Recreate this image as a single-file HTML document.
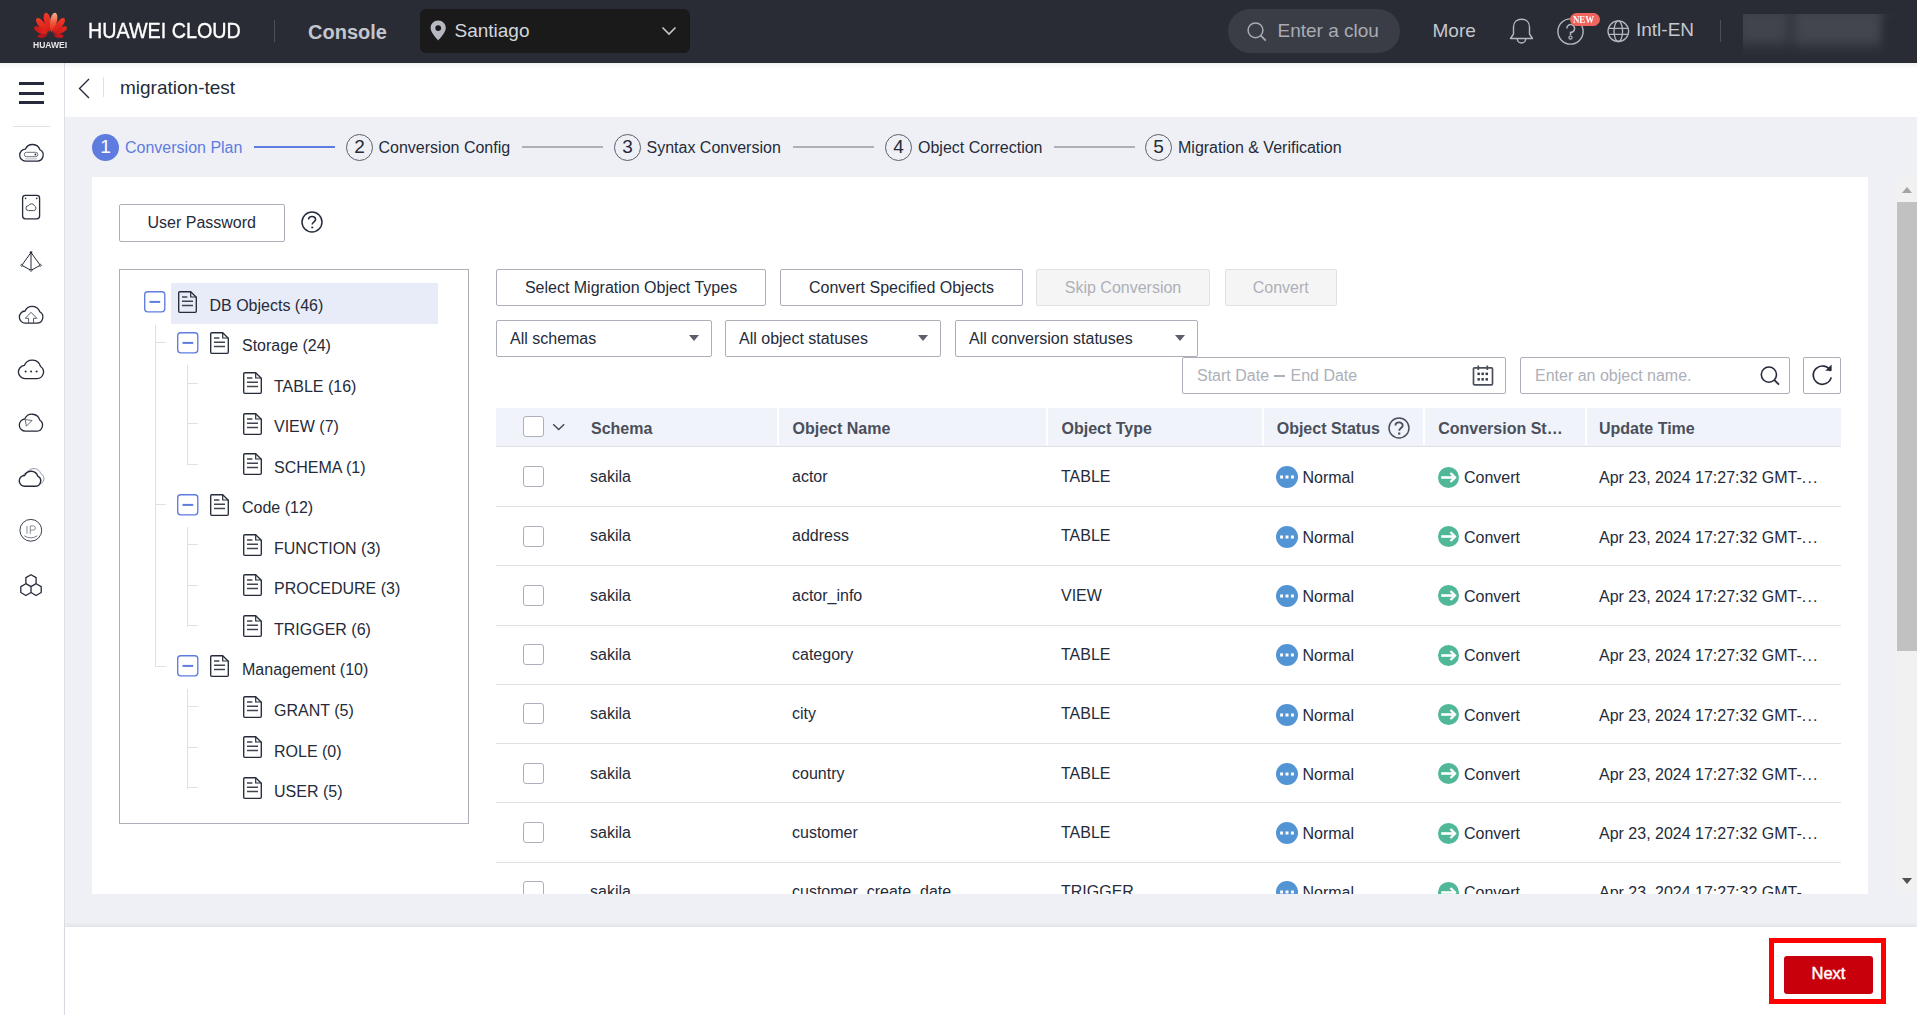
<!DOCTYPE html>
<html><head><meta charset="utf-8">
<style>
*{box-sizing:border-box;margin:0;padding:0}
html,body{width:1917px;height:1015px;overflow:hidden;background:#eef0f5;font-family:"Liberation Sans",sans-serif;color:#252b3a;font-size:16px}
.a{position:absolute}
.t{position:absolute;white-space:nowrap;line-height:1}
svg{position:absolute;overflow:visible}
.btn{position:absolute;border:1px solid #adb0b8;border-radius:2px;background:#fff}
.dis{background:#f5f5f6;border-color:#dfe1e6}
.cb{position:absolute;width:21px;height:21px;border:1px solid #adb0b8;border-radius:3px;background:#fff}
.step{position:absolute;width:27px;height:27px;border-radius:50%;border:1px solid #5a5f6b}
.sline{position:absolute;height:2px;background:#adb0b8;top:146px;width:81px}
.tri{position:absolute;width:0;height:0;border-left:5px solid transparent;border-right:5px solid transparent;border-top:6px solid #5a5f6b}
.hl{position:absolute;background:#dfe1e6}
</style></head><body>
<div class="a" style="left:0;top:0;width:1917px;height:63px;background:#292c34"></div>
<svg style="left:33px;top:11px" width="36" height="28" viewBox="0 0 36 28"><defs><linearGradient id="lgA" x1="0" y1="0" x2="0" y2="1"><stop offset="0" stop-color="#f03a2a"/><stop offset="1" stop-color="#d81a14"/></linearGradient><linearGradient id="lgB" x1="0" y1="0" x2="0" y2="1"><stop offset="0" stop-color="#f7b08e"/><stop offset="0.5" stop-color="#ee5a3c"/><stop offset="1" stop-color="#e0241a"/></linearGradient><linearGradient id="lgC" x1="0" y1="0" x2="1" y2="0"><stop offset="0" stop-color="#c8181a"/><stop offset="1" stop-color="#e8261c"/></linearGradient></defs><path d="M16.70,21.40 C19.97,13.62 17.10,1.35 12.80,1.80 C8.66,3.03 10.70,15.46 16.70,21.40Z" fill="url(#lgA)"/><path d="M18.30,21.40 C24.30,15.46 26.34,3.03 22.20,1.80 C17.90,1.35 15.03,13.62 18.30,21.40Z" fill="url(#lgB)"/><path d="M15.40,22.20 C14.62,14.35 6.89,5.26 3.60,7.40 C0.79,10.13 7.92,19.69 15.40,22.20Z" fill="url(#lgA)"/><path d="M19.60,22.20 C27.08,19.69 34.21,10.13 31.40,7.40 C28.11,5.26 20.38,14.35 19.60,22.20Z" fill="url(#lgA)"/><path d="M14.40,23.40 C11.62,17.50 3.14,13.27 1.20,16.20 C-0.21,19.42 7.94,24.26 14.40,23.40Z" fill="url(#lgC)"/><path d="M20.60,23.40 C27.06,24.26 35.21,19.42 33.80,16.20 C31.86,13.27 23.38,17.50 20.60,23.40Z" fill="url(#lgC)"/><path d="M14.00,24.80 C10.59,22.19 4.68,22.69 4.60,25.20 C4.89,27.69 10.83,27.69 14.00,24.80Z" fill="#b8141b"/><path d="M21.00,24.80 C24.17,27.69 30.11,27.69 30.40,25.20 C30.32,22.69 24.41,22.19 21.00,24.80Z" fill="#c8161d"/></svg>
<div class="t" style="left:33px;top:40.77px;font-size:8.8px;color:#e6e6e6;font-weight:bold;transform:scaleX(0.97);transform-origin:0 0">HUAWEI</div>
<div class="t" style="left:88px;top:19.91px;font-size:22px;color:#ffffff;transform:scaleX(0.897);transform-origin:0 0;-webkit-text-stroke:0.35px #fff">HUAWEI CLOUD</div>
<div class="a" style="left:274px;top:20px;width:1px;height:22px;background:#4d5058"></div>
<div class="t" style="left:308px;top:22.15px;font-size:20px;color:#c3c6cd;font-weight:bold">Console</div>
<div class="a" style="left:420px;top:9px;width:270px;height:44px;background:#1a1a1b;border-radius:6px"></div>
<svg style="left:430px;top:20px" width="17" height="21" viewBox="0 0 17 21"><path d="M8.2 0.6C3.9 0.6 0.6 3.9 0.6 8.1c0 4.8 7.6 12.3 7.6 12.3s7.6-7.5 7.6-12.3C15.8 3.9 12.5 0.6 8.2 0.6z" fill="#b6b9c1"/><circle cx="8.2" cy="8.1" r="2.9" fill="#1a1a1b"/></svg>
<div class="t" style="left:454.5px;top:21.17px;font-size:19px;color:#d3d6dc">Santiago</div>
<svg style="left:661px;top:26px" width="16" height="10" viewBox="0 0 16 10"><path d="M1.5 1.5 L8 8 L14.5 1.5" fill="none" stroke="#c5c8cf" stroke-width="1.6"/></svg>
<div class="a" style="left:1228px;top:9px;width:172px;height:44px;background:#3a3d45;border-radius:22px"></div>
<svg style="left:1246px;top:21px" width="22" height="22" viewBox="0 0 22 22"><circle cx="9.5" cy="9.3" r="7.4" fill="none" stroke="#a9acb4" stroke-width="1.5"/><path d="M14.8 14.6 L19.8 19.6" stroke="#a9acb4" stroke-width="1.7"/></svg>
<div class="t" style="left:1277.5px;top:21.07px;font-size:19px;color:#a9acb4">Enter a clou</div>
<div class="t" style="left:1432.5px;top:21.07px;font-size:19px;color:#c5c8cf">More</div>
<svg style="left:1509px;top:18px" width="25" height="27" viewBox="0 0 25 27"><path d="M4.5 16 V9 C4.5 4 8 1.2 12.5 1.2 C17 1.2 20.5 4 20.5 9 V16 L23.5 20.5 H1.5 Z" fill="none" stroke="#b4b7be" stroke-width="1.4" stroke-linejoin="round"/><path d="M8.3 20.8 A4.2 4.2 0 0 0 16.7 20.8" fill="none" stroke="#b4b7be" stroke-width="1.4"/></svg>
<svg style="left:1556px;top:17px" width="29" height="29" viewBox="0 0 29 29"><circle cx="14.5" cy="14.5" r="12.6" fill="none" stroke="#b4b7be" stroke-width="1.4"/><path d="M10.8 11.5 A3.9 3.9 0 1 1 14.5 15.4 V18.2" fill="none" stroke="#b4b7be" stroke-width="1.5"/><circle cx="14.5" cy="20.6" r="1.6" fill="none" stroke="#b4b7be" stroke-width="1.2"/></svg>
<div class="a" style="left:1570px;top:13px;width:30px;height:13px;background:#f0665e;border-radius:7px"></div>
<div class="t" style="left:1573px;top:14.97px;font-size:10.5px;color:#fff;font-weight:bold;font-family:'Liberation Serif',serif;transform:scaleX(0.84);transform-origin:0 0">NEW</div>
<svg style="left:1606px;top:19px" width="24" height="24" viewBox="0 0 24 24"><g fill="none" stroke="#b4b7be" stroke-width="1.3"><circle cx="12.3" cy="12.2" r="10.3"/><ellipse cx="12.3" cy="12.2" rx="4.3" ry="10.3"/><path d="M2.5 9.4 H22.1 M2.5 15.3 H22.1"/></g></svg>
<div class="t" style="left:1636px;top:20.47px;font-size:19px;color:#c5c8cf">Intl-EN</div>
<div class="a" style="left:1720px;top:20px;width:1px;height:22px;background:#4d5058"></div>
<div class="a" style="left:1743px;top:14px;width:157px;height:41px;background:#2b2e35;overflow:hidden"><div class="a" style="left:-6px;top:-6px;width:52px;height:36px;background:#41444c;filter:blur(6px)"></div><div class="a" style="left:50px;top:-6px;width:92px;height:37px;background:#43464e;filter:blur(6px)"></div><div class="a" style="left:140px;top:0px;width:30px;height:45px;background:#292c33;filter:blur(5px)"></div></div>
<div class="a" style="left:0;top:63px;width:65px;height:952px;background:#fff;border-right:1px solid #dcdfe6"></div>
<div class="a" style="left:19px;top:82px;width:25px;height:3px;background:#252b3a"></div>
<div class="a" style="left:19px;top:91.5px;width:25px;height:3px;background:#252b3a"></div>
<div class="a" style="left:19px;top:101px;width:25px;height:3px;background:#252b3a"></div>
<div class="a" style="left:13px;top:126px;width:37px;height:1px;background:#dfe1e6"></div>
<svg style="left:0;top:0" width="65" height="1015" viewBox="0 0 65 1015"><path d="M25.48,161.10 A5.98,5.98 0 0 1 25.40,149.15 A7.80,7.80 0 0 1 39.92,149.79 A5.98,5.98 0 0 1 37.22,161.10 Z" fill="none" stroke="#252b3a" stroke-width="1.3"/><rect x="24.3" y="152.3" width="13.6" height="4.4" rx="2.2" fill="none" stroke="#6a6f7a" stroke-width="1"/><circle cx="35.4" cy="154.5" r="0.9" fill="#252b3a"/><path d="M25 158.9 H37" stroke="#b8bbc2" stroke-width="1"/><rect x="22.6" y="195.4" width="17" height="23.4" rx="2.8" fill="none" stroke="#252b3a" stroke-width="1.3"/><circle cx="25.6" cy="198.4" r="0.8" fill="#252b3a"/><circle cx="36.8" cy="198.4" r="0.8" fill="#252b3a"/><path d="M28.45,210.60 A2.45,2.45 0 1 1 28.58,205.71 A3.20,3.20 0 0 1 34.50,205.90 A2.45,2.45 0 0 1 33.55,210.60 Z" fill="none" stroke="#4a4f5b" stroke-width="1"/><path d="M31 252.5 L21.8 265.3 L31 270.3 L40.3 265.3 Z M31 252.5 V270.3" fill="none" stroke="#252b3a" stroke-width="1"/><circle cx="31" cy="252.6" r="1.3" fill="#252b3a"/><circle cx="21.8" cy="265.3" r="1" fill="#fff" stroke="#252b3a" stroke-width="0.8"/><circle cx="40.3" cy="265.3" r="1" fill="#fff" stroke="#252b3a" stroke-width="0.8"/><circle cx="31" cy="270.3" r="1" fill="#fff" stroke="#252b3a" stroke-width="0.8"/><path d="M25.35,323.10 A6.05,6.05 0 0 1 25.05,311.01 A7.90,7.90 0 0 1 39.79,311.77 A6.05,6.05 0 0 1 36.85,323.10 Z" fill="none" stroke="#252b3a" stroke-width="1.3"/><path d="M28.6 323 V318.3 H25.3 L31 312.3 L36.8 318.3 H33.5 V323" fill="none" stroke="#5a5f6b" stroke-width="1"/><path d="M25.12,378.60 A6.62,6.62 0 0 1 24.32,365.40 A8.65,8.65 0 0 1 40.57,366.48 A6.62,6.62 0 0 1 36.88,378.60 Z" fill="none" stroke="#252b3a" stroke-width="1.3"/><circle cx="25.6" cy="371.4" r="1" fill="#252b3a"/><circle cx="31.1" cy="371.4" r="1" fill="#252b3a"/><circle cx="36.6" cy="371.4" r="1" fill="#252b3a"/><path d="M25.42,431.20 A6.12,6.12 0 0 1 24.74,419.00 A7.99,7.99 0 0 1 39.73,419.96 A6.12,6.12 0 0 1 36.38,431.20 Z" fill="none" stroke="#252b3a" stroke-width="1.3"/><path d="M25.2 419.6 L32 420.5 L26.4 426.2 Z" fill="none" stroke="#5a5f6b" stroke-width="0.9"/><path d="M27.12,484.20 A5.62,5.62 0 0 1 27.11,472.97 A7.33,7.33 0 0 1 40.75,473.54 A5.62,5.62 0 0 1 38.28,484.20 Z" fill="none" stroke="#9a9ea8" stroke-width="1"/><path d="M24.70,486.30 A5.40,5.40 0 0 1 24.62,475.50 A7.05,7.05 0 0 1 37.75,476.09 A5.40,5.40 0 0 1 35.30,486.30 Z" fill="#fff" stroke="#252b3a" stroke-width="1.4"/><circle cx="30.8" cy="530.3" r="10.9" fill="none" stroke="#3a3f4b" stroke-width="1"/><path d="M27 525.9 V533.8 M30.3 533.8 V525.9 H33.3 A2.1 2.1 0 0 1 33.3 530.1 H30.3" fill="none" stroke="#7a7f8a" stroke-width="0.9"/><path d="M24.3 535.8 Q30.8 540 37.4 535.8" fill="none" stroke="#6a6f7a" stroke-width="0.9"/><path d="M31.00,574.70 L36.11,577.65 L36.11,583.55 L31.00,586.50 L25.89,583.55 L25.89,577.65 Z M25.90,583.70 L31.01,586.65 L31.01,592.55 L25.90,595.50 L20.79,592.55 L20.79,586.65 Z M36.10,583.70 L41.21,586.65 L41.21,592.55 L36.10,595.50 L30.99,592.55 L30.99,586.65 Z" fill="none" stroke="#252b3a" stroke-width="1.3" stroke-linejoin="round"/></svg>
<div class="a" style="left:65px;top:63px;width:1852px;height:54px;background:#fff"></div>
<svg style="left:78px;top:78px" width="12" height="21" viewBox="0 0 12 21"><path d="M11 1 L1.5 10.5 L11 20" fill="none" stroke="#252b3a" stroke-width="1.4"/></svg>
<div class="a" style="left:103px;top:77px;width:1px;height:20px;background:#dfe1e6"></div>
<div class="t" style="left:120px;top:78.07px;font-size:19px">migration-test</div>
<div class="a" style="left:0px;top:63px;width:1917px;height:6px;background:linear-gradient(rgba(0,0,0,0.05),rgba(0,0,0,0))"></div>
<div class="a" style="left:92px;top:134px;width:27px;height:27px;border-radius:50%;background:#5e7ce0"></div>
<div class="t" style="left:92px;top:136.97px;font-size:19px;color:#fff;width:27px;text-align:center">1</div>
<div class="t" style="left:125px;top:140.12px;font-size:16px;color:#5e7ce0">Conversion Plan</div>
<div class="sline" style="left:254px;background:#5e7ce0"></div>
<div class="step" style="left:346px;top:134px"></div>
<div class="t" style="left:346px;top:136.97px;font-size:19px;width:27px;text-align:center">2</div>
<div class="t" style="left:378.5px;top:140.12px;font-size:16px">Conversion Config</div>
<div class="sline" style="left:522px"></div>
<div class="step" style="left:614px;top:134px"></div>
<div class="t" style="left:614px;top:136.97px;font-size:19px;width:27px;text-align:center">3</div>
<div class="t" style="left:646.5px;top:140.12px;font-size:16px">Syntax Conversion</div>
<div class="sline" style="left:793px"></div>
<div class="step" style="left:885px;top:134px"></div>
<div class="t" style="left:885px;top:136.97px;font-size:19px;width:27px;text-align:center">4</div>
<div class="t" style="left:918px;top:140.12px;font-size:16px">Object Correction</div>
<div class="sline" style="left:1054px"></div>
<div class="step" style="left:1145px;top:134px"></div>
<div class="t" style="left:1145px;top:136.97px;font-size:19px;width:27px;text-align:center">5</div>
<div class="t" style="left:1178px;top:140.12px;font-size:16px">Migration &amp; Verification</div>
<div class="a" style="left:92px;top:177px;width:1776px;height:717px;background:#fff"></div>
<div class="a" style="left:0;top:0;width:1917px;height:894px;overflow:hidden">
<div class="btn" style="left:119px;top:204px;width:166px;height:37.5px"></div>
<div class="t" style="left:147.5px;top:214.72px;font-size:16px">User Password</div>
<svg style="left:301px;top:211.3px" width="22" height="22" viewBox="0 0 22 22"><circle cx="11" cy="11" r="10" fill="none" stroke="#252b3a" stroke-width="1.5"/><path d="M7.6 8.6 C7.6 4.6 14.6 4.6 14.6 8.4 C14.6 10.8 11.2 11 11.2 13.6" fill="none" stroke="#252b3a" stroke-width="1.6"/><rect x="10.3" y="15.6" width="1.9" height="1.7" fill="#252b3a"/></svg>
<div class="a" style="left:119px;top:269px;width:350px;height:555px;border:1px solid #adb0b8"></div>
<div class="a" style="left:171px;top:283px;width:267px;height:41px;background:#e8ecf8"></div>
<svg style="left:144.3px;top:291.30px" width="21.5" height="21.5" viewBox="0 0 21.5 21.5"><rect x="0.7" y="0.7" width="20.1" height="20.1" rx="3" fill="none" stroke="#5e7ce0" stroke-width="1.35"/><path d="M5.5 10.9 H16.2" stroke="#5e7ce0" stroke-width="2"/></svg>
<svg style="left:178px;top:291.30px" width="19" height="22" viewBox="0 0 19 22"><path d="M1.8 0.7 H12.7 L18.3 6.2 V20.2 Q18.3 21.3 17.2 21.3 H1.8 Q0.7 21.3 0.7 20.2 V1.8 Q0.7 0.7 1.8 0.7 Z" fill="none" stroke="#252b3a" stroke-width="1.35" stroke-linejoin="round"/><path d="M12.7 0.7 V6 H18.3" fill="none" stroke="#252b3a" stroke-width="1.2"/><path d="M4 6 H9.4 M4 10.2 H15 M4 14.4 H15" stroke="#3f4450" stroke-width="1.5"/></svg>
<div class="t" style="left:209.5px;top:297.72px;font-size:16px">DB Objects (46)</div>
<svg style="left:177px;top:331.75px" width="21.5" height="21.5" viewBox="0 0 21.5 21.5"><rect x="0.7" y="0.7" width="20.1" height="20.1" rx="3" fill="none" stroke="#5e7ce0" stroke-width="1.35"/><path d="M5.5 10.9 H16.2" stroke="#5e7ce0" stroke-width="2"/></svg>
<svg style="left:210.3px;top:331.75px" width="19" height="22" viewBox="0 0 19 22"><path d="M1.8 0.7 H12.7 L18.3 6.2 V20.2 Q18.3 21.3 17.2 21.3 H1.8 Q0.7 21.3 0.7 20.2 V1.8 Q0.7 0.7 1.8 0.7 Z" fill="none" stroke="#252b3a" stroke-width="1.35" stroke-linejoin="round"/><path d="M12.7 0.7 V6 H18.3" fill="none" stroke="#252b3a" stroke-width="1.2"/><path d="M4 6 H9.4 M4 10.2 H15 M4 14.4 H15" stroke="#3f4450" stroke-width="1.5"/></svg>
<div class="t" style="left:242px;top:338.25px;font-size:16px">Storage (24)</div>
<div class="hl" style="left:155px;top:342.15px;width:11px;height:1px"></div>
<svg style="left:243px;top:372.20px" width="19" height="22" viewBox="0 0 19 22"><path d="M1.8 0.7 H12.7 L18.3 6.2 V20.2 Q18.3 21.3 17.2 21.3 H1.8 Q0.7 21.3 0.7 20.2 V1.8 Q0.7 0.7 1.8 0.7 Z" fill="none" stroke="#252b3a" stroke-width="1.35" stroke-linejoin="round"/><path d="M12.7 0.7 V6 H18.3" fill="none" stroke="#252b3a" stroke-width="1.2"/><path d="M4 6 H9.4 M4 10.2 H15 M4 14.4 H15" stroke="#3f4450" stroke-width="1.5"/></svg>
<div class="t" style="left:274px;top:378.77px;font-size:16px">TABLE (16)</div>
<div class="hl" style="left:187px;top:382.60px;width:11px;height:1px"></div>
<svg style="left:243px;top:412.65px" width="19" height="22" viewBox="0 0 19 22"><path d="M1.8 0.7 H12.7 L18.3 6.2 V20.2 Q18.3 21.3 17.2 21.3 H1.8 Q0.7 21.3 0.7 20.2 V1.8 Q0.7 0.7 1.8 0.7 Z" fill="none" stroke="#252b3a" stroke-width="1.35" stroke-linejoin="round"/><path d="M12.7 0.7 V6 H18.3" fill="none" stroke="#252b3a" stroke-width="1.2"/><path d="M4 6 H9.4 M4 10.2 H15 M4 14.4 H15" stroke="#3f4450" stroke-width="1.5"/></svg>
<div class="t" style="left:274px;top:419.30px;font-size:16px">VIEW (7)</div>
<div class="hl" style="left:187px;top:423.05px;width:11px;height:1px"></div>
<svg style="left:243px;top:453.10px" width="19" height="22" viewBox="0 0 19 22"><path d="M1.8 0.7 H12.7 L18.3 6.2 V20.2 Q18.3 21.3 17.2 21.3 H1.8 Q0.7 21.3 0.7 20.2 V1.8 Q0.7 0.7 1.8 0.7 Z" fill="none" stroke="#252b3a" stroke-width="1.35" stroke-linejoin="round"/><path d="M12.7 0.7 V6 H18.3" fill="none" stroke="#252b3a" stroke-width="1.2"/><path d="M4 6 H9.4 M4 10.2 H15 M4 14.4 H15" stroke="#3f4450" stroke-width="1.5"/></svg>
<div class="t" style="left:274px;top:459.82px;font-size:16px">SCHEMA (1)</div>
<div class="hl" style="left:187px;top:463.50px;width:11px;height:1px"></div>
<svg style="left:177px;top:493.55px" width="21.5" height="21.5" viewBox="0 0 21.5 21.5"><rect x="0.7" y="0.7" width="20.1" height="20.1" rx="3" fill="none" stroke="#5e7ce0" stroke-width="1.35"/><path d="M5.5 10.9 H16.2" stroke="#5e7ce0" stroke-width="2"/></svg>
<svg style="left:210.3px;top:493.55px" width="19" height="22" viewBox="0 0 19 22"><path d="M1.8 0.7 H12.7 L18.3 6.2 V20.2 Q18.3 21.3 17.2 21.3 H1.8 Q0.7 21.3 0.7 20.2 V1.8 Q0.7 0.7 1.8 0.7 Z" fill="none" stroke="#252b3a" stroke-width="1.35" stroke-linejoin="round"/><path d="M12.7 0.7 V6 H18.3" fill="none" stroke="#252b3a" stroke-width="1.2"/><path d="M4 6 H9.4 M4 10.2 H15 M4 14.4 H15" stroke="#3f4450" stroke-width="1.5"/></svg>
<div class="t" style="left:242px;top:500.35px;font-size:16px">Code (12)</div>
<div class="hl" style="left:155px;top:503.95px;width:11px;height:1px"></div>
<svg style="left:243px;top:534.00px" width="19" height="22" viewBox="0 0 19 22"><path d="M1.8 0.7 H12.7 L18.3 6.2 V20.2 Q18.3 21.3 17.2 21.3 H1.8 Q0.7 21.3 0.7 20.2 V1.8 Q0.7 0.7 1.8 0.7 Z" fill="none" stroke="#252b3a" stroke-width="1.35" stroke-linejoin="round"/><path d="M12.7 0.7 V6 H18.3" fill="none" stroke="#252b3a" stroke-width="1.2"/><path d="M4 6 H9.4 M4 10.2 H15 M4 14.4 H15" stroke="#3f4450" stroke-width="1.5"/></svg>
<div class="t" style="left:274px;top:540.87px;font-size:16px">FUNCTION (3)</div>
<div class="hl" style="left:187px;top:544.40px;width:11px;height:1px"></div>
<svg style="left:243px;top:574.45px" width="19" height="22" viewBox="0 0 19 22"><path d="M1.8 0.7 H12.7 L18.3 6.2 V20.2 Q18.3 21.3 17.2 21.3 H1.8 Q0.7 21.3 0.7 20.2 V1.8 Q0.7 0.7 1.8 0.7 Z" fill="none" stroke="#252b3a" stroke-width="1.35" stroke-linejoin="round"/><path d="M12.7 0.7 V6 H18.3" fill="none" stroke="#252b3a" stroke-width="1.2"/><path d="M4 6 H9.4 M4 10.2 H15 M4 14.4 H15" stroke="#3f4450" stroke-width="1.5"/></svg>
<div class="t" style="left:274px;top:581.39px;font-size:16px">PROCEDURE (3)</div>
<div class="hl" style="left:187px;top:584.85px;width:11px;height:1px"></div>
<svg style="left:243px;top:614.90px" width="19" height="22" viewBox="0 0 19 22"><path d="M1.8 0.7 H12.7 L18.3 6.2 V20.2 Q18.3 21.3 17.2 21.3 H1.8 Q0.7 21.3 0.7 20.2 V1.8 Q0.7 0.7 1.8 0.7 Z" fill="none" stroke="#252b3a" stroke-width="1.35" stroke-linejoin="round"/><path d="M12.7 0.7 V6 H18.3" fill="none" stroke="#252b3a" stroke-width="1.2"/><path d="M4 6 H9.4 M4 10.2 H15 M4 14.4 H15" stroke="#3f4450" stroke-width="1.5"/></svg>
<div class="t" style="left:274px;top:621.92px;font-size:16px">TRIGGER (6)</div>
<div class="hl" style="left:187px;top:625.30px;width:11px;height:1px"></div>
<svg style="left:177px;top:655.35px" width="21.5" height="21.5" viewBox="0 0 21.5 21.5"><rect x="0.7" y="0.7" width="20.1" height="20.1" rx="3" fill="none" stroke="#5e7ce0" stroke-width="1.35"/><path d="M5.5 10.9 H16.2" stroke="#5e7ce0" stroke-width="2"/></svg>
<svg style="left:210.3px;top:655.35px" width="19" height="22" viewBox="0 0 19 22"><path d="M1.8 0.7 H12.7 L18.3 6.2 V20.2 Q18.3 21.3 17.2 21.3 H1.8 Q0.7 21.3 0.7 20.2 V1.8 Q0.7 0.7 1.8 0.7 Z" fill="none" stroke="#252b3a" stroke-width="1.35" stroke-linejoin="round"/><path d="M12.7 0.7 V6 H18.3" fill="none" stroke="#252b3a" stroke-width="1.2"/><path d="M4 6 H9.4 M4 10.2 H15 M4 14.4 H15" stroke="#3f4450" stroke-width="1.5"/></svg>
<div class="t" style="left:242px;top:662.44px;font-size:16px">Management (10)</div>
<div class="hl" style="left:155px;top:665.75px;width:11px;height:1px"></div>
<svg style="left:243px;top:695.80px" width="19" height="22" viewBox="0 0 19 22"><path d="M1.8 0.7 H12.7 L18.3 6.2 V20.2 Q18.3 21.3 17.2 21.3 H1.8 Q0.7 21.3 0.7 20.2 V1.8 Q0.7 0.7 1.8 0.7 Z" fill="none" stroke="#252b3a" stroke-width="1.35" stroke-linejoin="round"/><path d="M12.7 0.7 V6 H18.3" fill="none" stroke="#252b3a" stroke-width="1.2"/><path d="M4 6 H9.4 M4 10.2 H15 M4 14.4 H15" stroke="#3f4450" stroke-width="1.5"/></svg>
<div class="t" style="left:274px;top:702.97px;font-size:16px">GRANT (5)</div>
<div class="hl" style="left:187px;top:706.20px;width:11px;height:1px"></div>
<svg style="left:243px;top:736.25px" width="19" height="22" viewBox="0 0 19 22"><path d="M1.8 0.7 H12.7 L18.3 6.2 V20.2 Q18.3 21.3 17.2 21.3 H1.8 Q0.7 21.3 0.7 20.2 V1.8 Q0.7 0.7 1.8 0.7 Z" fill="none" stroke="#252b3a" stroke-width="1.35" stroke-linejoin="round"/><path d="M12.7 0.7 V6 H18.3" fill="none" stroke="#252b3a" stroke-width="1.2"/><path d="M4 6 H9.4 M4 10.2 H15 M4 14.4 H15" stroke="#3f4450" stroke-width="1.5"/></svg>
<div class="t" style="left:274px;top:743.50px;font-size:16px">ROLE (0)</div>
<div class="hl" style="left:187px;top:746.65px;width:11px;height:1px"></div>
<svg style="left:243px;top:776.70px" width="19" height="22" viewBox="0 0 19 22"><path d="M1.8 0.7 H12.7 L18.3 6.2 V20.2 Q18.3 21.3 17.2 21.3 H1.8 Q0.7 21.3 0.7 20.2 V1.8 Q0.7 0.7 1.8 0.7 Z" fill="none" stroke="#252b3a" stroke-width="1.35" stroke-linejoin="round"/><path d="M12.7 0.7 V6 H18.3" fill="none" stroke="#252b3a" stroke-width="1.2"/><path d="M4 6 H9.4 M4 10.2 H15 M4 14.4 H15" stroke="#3f4450" stroke-width="1.5"/></svg>
<div class="t" style="left:274px;top:784.02px;font-size:16px">USER (5)</div>
<div class="hl" style="left:187px;top:787.10px;width:11px;height:1px"></div>
<div class="hl" style="left:155px;top:325px;width:1px;height:342.42px"></div>
<div class="hl" style="left:187px;top:364.82px;width:1px;height:99.97px"></div>
<div class="hl" style="left:187px;top:526.92px;width:1px;height:99.98px"></div>
<div class="hl" style="left:187px;top:689.02px;width:1px;height:99.97px"></div>
<div class="btn" style="left:496px;top:269px;width:270px;height:37px;"></div>
<div class="t" style="left:496px;width:270px;text-align:center;top:280.42px;color:#252b3a">Select Migration Object Types</div>
<div class="btn" style="left:780px;top:269px;width:243px;height:37px;"></div>
<div class="t" style="left:780px;width:243px;text-align:center;top:280.42px;color:#252b3a">Convert Specified Objects</div>
<div class="btn dis" style="left:1036px;top:269px;width:174px;height:37px;"></div>
<div class="t" style="left:1036px;width:174px;text-align:center;top:280.42px;color:#adb0b8">Skip Conversion</div>
<div class="btn dis" style="left:1224.5px;top:269px;width:112.5px;height:37px;"></div>
<div class="t" style="left:1224.5px;width:112.5px;text-align:center;top:280.42px;color:#adb0b8">Convert</div>
<div class="btn" style="left:496px;top:320px;width:216px;height:37px"></div>
<div class="t" style="left:510px;top:330.52px;font-size:16px">All schemas</div>
<div class="tri" style="left:689px;top:335px"></div>
<div class="btn" style="left:725px;top:320px;width:216px;height:37px"></div>
<div class="t" style="left:739px;top:330.52px;font-size:16px">All object statuses</div>
<div class="tri" style="left:918px;top:335px"></div>
<div class="btn" style="left:955px;top:320px;width:243px;height:37px"></div>
<div class="t" style="left:969px;top:330.52px;font-size:16px">All conversion statuses</div>
<div class="tri" style="left:1175px;top:335px"></div>
<div class="btn" style="left:1182px;top:357px;width:323.5px;height:37px"></div>
<div class="t" style="left:1197px;top:368.32px;font-size:16px;color:#adb0b8">Start Date</div>
<div class="a" style="left:1274px;top:374.5px;width:11px;height:2px;background:#adb0b8"></div>
<div class="t" style="left:1290.5px;top:368.32px;font-size:16px;color:#adb0b8">End Date</div>
<svg style="left:1472px;top:365px" width="22" height="21" viewBox="0 0 22 21"><rect x="1.5" y="2.8" width="19" height="17" rx="1" fill="none" stroke="#4a4f5b" stroke-width="1.7"/><path d="M6.3 0.5 V5 M15.3 0.5 V5" stroke="#4a4f5b" stroke-width="1.7"/><g fill="#3a3f4b"><rect x="5.4" y="7.6" width="2.5" height="2.5"/><rect x="9.4" y="7.6" width="2.5" height="2.5"/><rect x="13.5" y="7.6" width="2.5" height="2.5"/><rect x="5.4" y="13.1" width="2.5" height="2.5"/><rect x="9.4" y="13.1" width="2.5" height="2.5"/><rect x="13.5" y="13.1" width="2.5" height="2.5"/></g></svg>
<div class="btn" style="left:1520px;top:357px;width:269.5px;height:37px"></div>
<div class="t" style="left:1535px;top:368.32px;font-size:16px;color:#adb0b8">Enter an object name.</div>
<svg style="left:1759px;top:365px" width="22" height="22" viewBox="0 0 22 22"><circle cx="9.9" cy="9.6" r="7.6" fill="none" stroke="#252b3a" stroke-width="1.6"/><path d="M15.4 15.2 L20 19.7" stroke="#252b3a" stroke-width="1.8"/></svg>
<div class="btn" style="left:1803px;top:357px;width:37.5px;height:37px"></div>
<svg style="left:1811px;top:363px" width="23" height="23" viewBox="0 0 23 23"><path d="M19.6 8.2 A9.1 9.1 0 1 0 20.2 14.4" fill="none" stroke="#252b3a" stroke-width="1.7"/><path d="M20.6 1.6 L20.6 7.8 L14.3 7.8 Z" fill="#252b3a"/></svg>
<div class="a" style="left:496px;top:408px;width:1344.5px;height:39px;background:#f0f3fa;border-bottom:1px solid #dfe1e6"></div>
<div class="a" style="left:777px;top:408px;width:2px;height:37px;background:#fff"></div>
<div class="a" style="left:1046px;top:408px;width:2px;height:37px;background:#fff"></div>
<div class="a" style="left:1262px;top:408px;width:2px;height:37px;background:#fff"></div>
<div class="a" style="left:1423px;top:408px;width:2px;height:37px;background:#fff"></div>
<div class="a" style="left:1585px;top:408px;width:2px;height:37px;background:#fff"></div>
<div class="cb" style="left:523px;top:416px"></div>
<svg style="left:551.5px;top:422.5px" width="15" height="9" viewBox="0 0 15 9"><path d="M1.2 1.2 L6.7 6.6 L12.2 1.2" fill="none" stroke="#3f4451" stroke-width="1.35"/></svg>
<div class="t" style="left:591px;top:421.42px;font-size:16px;color:#4a4f5b;font-weight:bold">Schema</div>
<div class="t" style="left:792.5px;top:421.42px;font-size:16px;color:#4a4f5b;font-weight:bold">Object Name</div>
<div class="t" style="left:1061.5px;top:421.42px;font-size:16px;color:#4a4f5b;font-weight:bold">Object Type</div>
<div class="t" style="left:1276.7px;top:421.42px;font-size:16px;color:#4a4f5b;font-weight:bold">Object Status</div>
<div class="t" style="left:1438.2px;top:421.42px;font-size:16px;color:#4a4f5b;font-weight:bold">Conversion St…</div>
<div class="t" style="left:1599px;top:421.42px;font-size:16px;color:#4a4f5b;font-weight:bold">Update Time</div>
<svg style="left:1388px;top:416.5px" width="22" height="22" viewBox="0 0 22 22"><circle cx="11" cy="11" r="10" fill="none" stroke="#4a4f5b" stroke-width="1.5"/><path d="M7.5 8.6 C7.5 4.4 14.7 4.4 14.7 8.4 C14.7 10.9 11.2 11 11.2 13.8" fill="none" stroke="#4a4f5b" stroke-width="1.9"/><rect x="10.1" y="15.5" width="2.2" height="2.1" fill="#4a4f5b"/></svg>
<div class="cb" style="left:523px;top:466.30px"></div>
<div class="t" style="left:590px;top:469.12px;font-size:16px">sakila</div>
<div class="t" style="left:792px;top:469.12px;font-size:16px">actor</div>
<div class="t" style="left:1061px;top:469.12px;font-size:16px">TABLE</div>
<svg style="left:1276px;top:466.40px" width="22" height="22" viewBox="0 0 22 22"><circle cx="11" cy="11" r="11" fill="#5394d4"/><g fill="#fff"><rect x="4.1" y="9.5" width="3" height="3"/><rect x="9.5" y="9.5" width="3" height="3"/><rect x="14.9" y="9.5" width="3" height="3"/></g></svg>
<div class="t" style="left:1302.5px;top:470.42px;font-size:16px">Normal</div>
<svg style="left:1438px;top:466.90px" width="21" height="21" viewBox="0 0 21 21"><circle cx="10.5" cy="10.5" r="10.5" fill="#50b898"/><path d="M3.2 10.5 H15.5" stroke="#fff" stroke-width="2.6"/><path d="M12.5 6 L17 10.5 L12.5 15" fill="none" stroke="#fff" stroke-width="2.4"/></svg>
<div class="t" style="left:1464px;top:470.42px;font-size:16px">Convert</div>
<div class="t" style="left:1599px;top:470.42px;font-size:16px">Apr 23, 2024 17:27:32 GMT-<span style="letter-spacing:1.2px">...</span></div>
<div class="a" style="left:496px;top:506.00px;width:1344.5px;height:1px;background:#dfe1e6"></div>
<div class="cb" style="left:523px;top:525.58px"></div>
<div class="t" style="left:590px;top:528.40px;font-size:16px">sakila</div>
<div class="t" style="left:792px;top:528.40px;font-size:16px">address</div>
<div class="t" style="left:1061px;top:528.40px;font-size:16px">TABLE</div>
<svg style="left:1276px;top:525.68px" width="22" height="22" viewBox="0 0 22 22"><circle cx="11" cy="11" r="11" fill="#5394d4"/><g fill="#fff"><rect x="4.1" y="9.5" width="3" height="3"/><rect x="9.5" y="9.5" width="3" height="3"/><rect x="14.9" y="9.5" width="3" height="3"/></g></svg>
<div class="t" style="left:1302.5px;top:529.70px;font-size:16px">Normal</div>
<svg style="left:1438px;top:526.18px" width="21" height="21" viewBox="0 0 21 21"><circle cx="10.5" cy="10.5" r="10.5" fill="#50b898"/><path d="M3.2 10.5 H15.5" stroke="#fff" stroke-width="2.6"/><path d="M12.5 6 L17 10.5 L12.5 15" fill="none" stroke="#fff" stroke-width="2.4"/></svg>
<div class="t" style="left:1464px;top:529.70px;font-size:16px">Convert</div>
<div class="t" style="left:1599px;top:529.70px;font-size:16px">Apr 23, 2024 17:27:32 GMT-<span style="letter-spacing:1.2px">...</span></div>
<div class="a" style="left:496px;top:565.28px;width:1344.5px;height:1px;background:#dfe1e6"></div>
<div class="cb" style="left:523px;top:584.86px"></div>
<div class="t" style="left:590px;top:587.68px;font-size:16px">sakila</div>
<div class="t" style="left:792px;top:587.68px;font-size:16px">actor_info</div>
<div class="t" style="left:1061px;top:587.68px;font-size:16px">VIEW</div>
<svg style="left:1276px;top:584.96px" width="22" height="22" viewBox="0 0 22 22"><circle cx="11" cy="11" r="11" fill="#5394d4"/><g fill="#fff"><rect x="4.1" y="9.5" width="3" height="3"/><rect x="9.5" y="9.5" width="3" height="3"/><rect x="14.9" y="9.5" width="3" height="3"/></g></svg>
<div class="t" style="left:1302.5px;top:588.98px;font-size:16px">Normal</div>
<svg style="left:1438px;top:585.46px" width="21" height="21" viewBox="0 0 21 21"><circle cx="10.5" cy="10.5" r="10.5" fill="#50b898"/><path d="M3.2 10.5 H15.5" stroke="#fff" stroke-width="2.6"/><path d="M12.5 6 L17 10.5 L12.5 15" fill="none" stroke="#fff" stroke-width="2.4"/></svg>
<div class="t" style="left:1464px;top:588.98px;font-size:16px">Convert</div>
<div class="t" style="left:1599px;top:588.98px;font-size:16px">Apr 23, 2024 17:27:32 GMT-<span style="letter-spacing:1.2px">...</span></div>
<div class="a" style="left:496px;top:624.56px;width:1344.5px;height:1px;background:#dfe1e6"></div>
<div class="cb" style="left:523px;top:644.14px"></div>
<div class="t" style="left:590px;top:646.96px;font-size:16px">sakila</div>
<div class="t" style="left:792px;top:646.96px;font-size:16px">category</div>
<div class="t" style="left:1061px;top:646.96px;font-size:16px">TABLE</div>
<svg style="left:1276px;top:644.24px" width="22" height="22" viewBox="0 0 22 22"><circle cx="11" cy="11" r="11" fill="#5394d4"/><g fill="#fff"><rect x="4.1" y="9.5" width="3" height="3"/><rect x="9.5" y="9.5" width="3" height="3"/><rect x="14.9" y="9.5" width="3" height="3"/></g></svg>
<div class="t" style="left:1302.5px;top:648.26px;font-size:16px">Normal</div>
<svg style="left:1438px;top:644.74px" width="21" height="21" viewBox="0 0 21 21"><circle cx="10.5" cy="10.5" r="10.5" fill="#50b898"/><path d="M3.2 10.5 H15.5" stroke="#fff" stroke-width="2.6"/><path d="M12.5 6 L17 10.5 L12.5 15" fill="none" stroke="#fff" stroke-width="2.4"/></svg>
<div class="t" style="left:1464px;top:648.26px;font-size:16px">Convert</div>
<div class="t" style="left:1599px;top:648.26px;font-size:16px">Apr 23, 2024 17:27:32 GMT-<span style="letter-spacing:1.2px">...</span></div>
<div class="a" style="left:496px;top:683.84px;width:1344.5px;height:1px;background:#dfe1e6"></div>
<div class="cb" style="left:523px;top:703.42px"></div>
<div class="t" style="left:590px;top:706.24px;font-size:16px">sakila</div>
<div class="t" style="left:792px;top:706.24px;font-size:16px">city</div>
<div class="t" style="left:1061px;top:706.24px;font-size:16px">TABLE</div>
<svg style="left:1276px;top:703.52px" width="22" height="22" viewBox="0 0 22 22"><circle cx="11" cy="11" r="11" fill="#5394d4"/><g fill="#fff"><rect x="4.1" y="9.5" width="3" height="3"/><rect x="9.5" y="9.5" width="3" height="3"/><rect x="14.9" y="9.5" width="3" height="3"/></g></svg>
<div class="t" style="left:1302.5px;top:707.54px;font-size:16px">Normal</div>
<svg style="left:1438px;top:704.02px" width="21" height="21" viewBox="0 0 21 21"><circle cx="10.5" cy="10.5" r="10.5" fill="#50b898"/><path d="M3.2 10.5 H15.5" stroke="#fff" stroke-width="2.6"/><path d="M12.5 6 L17 10.5 L12.5 15" fill="none" stroke="#fff" stroke-width="2.4"/></svg>
<div class="t" style="left:1464px;top:707.54px;font-size:16px">Convert</div>
<div class="t" style="left:1599px;top:707.54px;font-size:16px">Apr 23, 2024 17:27:32 GMT-<span style="letter-spacing:1.2px">...</span></div>
<div class="a" style="left:496px;top:743.12px;width:1344.5px;height:1px;background:#dfe1e6"></div>
<div class="cb" style="left:523px;top:762.70px"></div>
<div class="t" style="left:590px;top:765.52px;font-size:16px">sakila</div>
<div class="t" style="left:792px;top:765.52px;font-size:16px">country</div>
<div class="t" style="left:1061px;top:765.52px;font-size:16px">TABLE</div>
<svg style="left:1276px;top:762.80px" width="22" height="22" viewBox="0 0 22 22"><circle cx="11" cy="11" r="11" fill="#5394d4"/><g fill="#fff"><rect x="4.1" y="9.5" width="3" height="3"/><rect x="9.5" y="9.5" width="3" height="3"/><rect x="14.9" y="9.5" width="3" height="3"/></g></svg>
<div class="t" style="left:1302.5px;top:766.82px;font-size:16px">Normal</div>
<svg style="left:1438px;top:763.30px" width="21" height="21" viewBox="0 0 21 21"><circle cx="10.5" cy="10.5" r="10.5" fill="#50b898"/><path d="M3.2 10.5 H15.5" stroke="#fff" stroke-width="2.6"/><path d="M12.5 6 L17 10.5 L12.5 15" fill="none" stroke="#fff" stroke-width="2.4"/></svg>
<div class="t" style="left:1464px;top:766.82px;font-size:16px">Convert</div>
<div class="t" style="left:1599px;top:766.82px;font-size:16px">Apr 23, 2024 17:27:32 GMT-<span style="letter-spacing:1.2px">...</span></div>
<div class="a" style="left:496px;top:802.40px;width:1344.5px;height:1px;background:#dfe1e6"></div>
<div class="cb" style="left:523px;top:821.98px"></div>
<div class="t" style="left:590px;top:824.80px;font-size:16px">sakila</div>
<div class="t" style="left:792px;top:824.80px;font-size:16px">customer</div>
<div class="t" style="left:1061px;top:824.80px;font-size:16px">TABLE</div>
<svg style="left:1276px;top:822.08px" width="22" height="22" viewBox="0 0 22 22"><circle cx="11" cy="11" r="11" fill="#5394d4"/><g fill="#fff"><rect x="4.1" y="9.5" width="3" height="3"/><rect x="9.5" y="9.5" width="3" height="3"/><rect x="14.9" y="9.5" width="3" height="3"/></g></svg>
<div class="t" style="left:1302.5px;top:826.10px;font-size:16px">Normal</div>
<svg style="left:1438px;top:822.58px" width="21" height="21" viewBox="0 0 21 21"><circle cx="10.5" cy="10.5" r="10.5" fill="#50b898"/><path d="M3.2 10.5 H15.5" stroke="#fff" stroke-width="2.6"/><path d="M12.5 6 L17 10.5 L12.5 15" fill="none" stroke="#fff" stroke-width="2.4"/></svg>
<div class="t" style="left:1464px;top:826.10px;font-size:16px">Convert</div>
<div class="t" style="left:1599px;top:826.10px;font-size:16px">Apr 23, 2024 17:27:32 GMT-<span style="letter-spacing:1.2px">...</span></div>
<div class="a" style="left:496px;top:861.68px;width:1344.5px;height:1px;background:#dfe1e6"></div>
<div class="cb" style="left:523px;top:881.26px"></div>
<div class="t" style="left:590px;top:884.08px;font-size:16px">sakila</div>
<div class="t" style="left:792px;top:884.08px;font-size:16px">customer_create_date</div>
<div class="t" style="left:1061px;top:884.08px;font-size:16px">TRIGGER</div>
<svg style="left:1276px;top:881.36px" width="22" height="22" viewBox="0 0 22 22"><circle cx="11" cy="11" r="11" fill="#5394d4"/><g fill="#fff"><rect x="4.1" y="9.5" width="3" height="3"/><rect x="9.5" y="9.5" width="3" height="3"/><rect x="14.9" y="9.5" width="3" height="3"/></g></svg>
<div class="t" style="left:1302.5px;top:885.38px;font-size:16px">Normal</div>
<svg style="left:1438px;top:881.86px" width="21" height="21" viewBox="0 0 21 21"><circle cx="10.5" cy="10.5" r="10.5" fill="#50b898"/><path d="M3.2 10.5 H15.5" stroke="#fff" stroke-width="2.6"/><path d="M12.5 6 L17 10.5 L12.5 15" fill="none" stroke="#fff" stroke-width="2.4"/></svg>
<div class="t" style="left:1464px;top:885.38px;font-size:16px">Convert</div>
<div class="t" style="left:1599px;top:885.38px;font-size:16px">Apr 23, 2024 17:27:32 GMT-<span style="letter-spacing:1.2px">...</span></div>
</div>
<div class="a" style="left:1895px;top:177px;width:22px;height:717px;background:#f1f1f1"></div>
<div class="a" style="left:1897px;top:202px;width:20px;height:449px;background:#c1c1c1"></div>
<div class="a" style="left:1901.7px;top:186.8px;width:0;height:0;border-left:5.7px solid transparent;border-right:5.7px solid transparent;border-bottom:6.3px solid #a3a3a3"></div>
<div class="a" style="left:1901.5px;top:878px;width:0;height:0;border-left:5.8px solid transparent;border-right:5.8px solid transparent;border-top:6.5px solid #505050"></div>
<div class="a" style="left:65px;top:927px;width:1852px;height:88px;background:#fff;box-shadow:0 -2px 4px rgba(0,0,0,0.06)"></div>
<div class="a" style="left:1769px;top:938px;width:117px;height:66px;border:5px solid #ff0000"></div>
<div class="a" style="left:1784px;top:956px;width:89px;height:38px;background:#c7000b;border-radius:3px"></div>
<div class="t" style="left:1784px;width:89px;text-align:center;top:965px;font-size:16.5px;color:#fff;-webkit-text-stroke:0.45px #fff">Next</div>
</body></html>
